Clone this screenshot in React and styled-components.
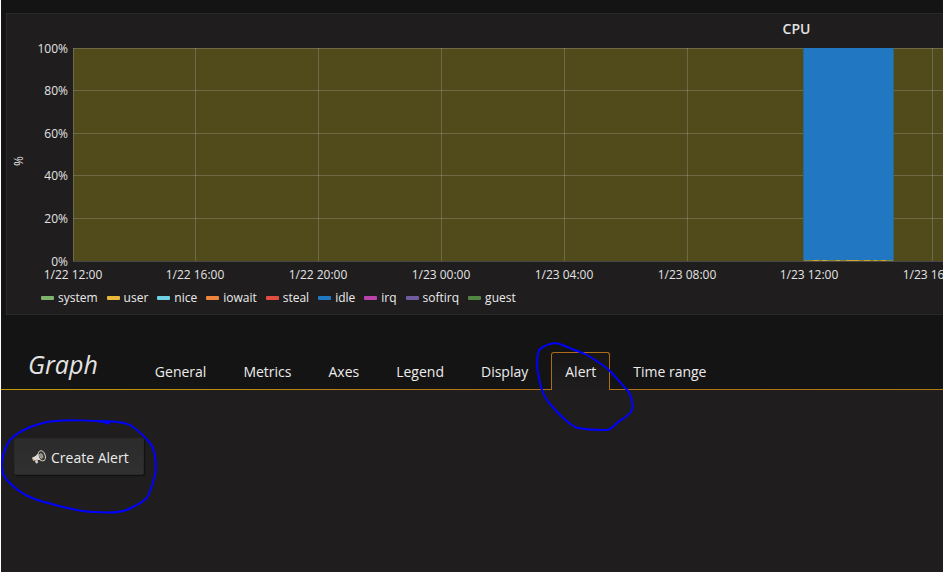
import React from "react";
import styled, { createGlobalStyle } from "styled-components";

const GlobalStyle = createGlobalStyle`
  * { box-sizing: border-box; }
  html, body { margin: 0; background: #141414; }
  body {
    font-family: "Open Sans", "Noto Sans", sans-serif;
    font-size: 14px;
    color: #e3e3e3;
    overflow: hidden;
  }
`;

const Page = styled.main`
  position: relative;
  display: flex;
  flex-direction: column;
  min-height: 100vh;
  padding-top: 13px;
  border-left: 1px solid #ffffff;
  overflow: hidden;
`;

/* The dashboard is wider than the window and runs off its right side. */
const Panel = styled.section`
  margin: 0 -644px 0 5px;
  border: 1px solid #292929;
  background: #1f1d1e;
`;

const PanelTitle = styled.h2`
  margin: 0;
  height: 30px;
  font-size: 14px;
  font-weight: 600;
  line-height: 30px;
  text-align: center;
`;

const Chart = styled.svg`
  display: block;
  width: 100%;
  height: 244px;
  font-size: 12px;
  fill: #e3e3e3;
`;

const Legend = styled.ul`
  display: flex;
  gap: 9px;
  margin: 0;
  padding: 0 0 6px 34px;
  list-style: none;
  font-size: 12px;
  line-height: 20px;
  color: #ececec;
`;

const LegendItem = styled.li`
  display: flex;
  align-items: center;
  gap: 4px;
`;

const Swatch = styled.span`
  width: 13px;
  height: 4px;
  border-radius: 1px;
  background: ${(p) => p.$color};
`;

const EditorHeader = styled.header`
  display: flex;
  align-items: flex-end;
  gap: 43px;
  height: 75px;
  padding-left: 27px;
  border-bottom: 1px solid;
  border-image: linear-gradient(90deg, #c49a08, #b06f18 60%, #b07a10) 1;
`;

const EditorTitle = styled.h1`
  margin: 0;
  font-size: 25px;
  font-style: italic;
  font-weight: 400;
  line-height: 50px;
`;

const Tabs = styled.nav`
  display: flex;
  align-items: flex-end;
  gap: 9px;
`;

const Tab = styled.button`
  height: ${(p) => (p.$active ? "38px" : "37px")};
  margin-bottom: ${(p) => (p.$active ? "-1px" : "0")};
  padding: 0 13px;
  border: 1px solid ${(p) => (p.$active ? "#b06a1c" : "transparent")};
  border-bottom: 0;
  border-radius: 3px 3px 0 0;
  background: ${(p) => (p.$active ? "linear-gradient(#171616, #1f1d1e)" : "transparent")};
  color: #ececec;
  font: inherit;
  white-space: nowrap;
  line-height: 38px;
`;

const EditorBody = styled.section`
  flex: 1;
  padding: 48px 13px;
  background: #1f1d1e;
`;

const CreateButton = styled.button`
  display: flex;
  align-items: center;
  gap: 4px;
  height: 37px;
  padding: 1px 14px 0 16px;
  border: 1px solid #292929;
  border-radius: 2px;
  background: linear-gradient(#2b2b2b, #303030);
  box-shadow: 1px 1px 1px #111111;
  color: #ececec;
  font: inherit;
`;

const Markup = styled.svg`
  position: absolute;
  top: 0;
  left: -1px;
  width: 943px;
  height: 572px;
  fill: none;
  stroke: #0000ff;
  stroke-width: 2;
  stroke-linejoin: round;
  pointer-events: none;
`;

const SERIES = [
  ["system", "#7eb26d"],
  ["user", "#eab839"],
  ["nice", "#6ed0e0"],
  ["iowait", "#ef843c"],
  ["steal", "#e24d42"],
  ["idle", "#1f78c1"],
  ["irq", "#ba43a9"],
  ["softirq", "#705da0"],
  ["guest", "#508642"],
];

const LEVELS = [100, 80, 60, 40, 20, 0];
const TIMES = [
  "1/22 12:00", "1/22 16:00", "1/22 20:00", "1/23 00:00", "1/23 04:00",
  "1/23 08:00", "1/23 12:00", "1/23 16:00", "1/23 20:00",
];
const TABS = ["General", "Metrics", "Axes", "Legend", "Display", "Alert", "Time range"];

const timeX = (i) => Math.floor(66 + i * 122.8);
const levelY = (v) => Math.floor(4 + (100 - v) * 2.13);

function CpuChart() {
  return (
    <Chart role="img" aria-label="CPU usage in percent">
      <rect x="66" y="4" width="1500" height="213" fill="#514a1b" />
      <g fill="#c8c8c8" fillOpacity="0.25">
        {LEVELS.map((v) => (
          <rect key={v} x="66" y={levelY(v)} width="1500" height="1" />
        ))}
        {TIMES.map((t, i) => (
          <rect key={t} x={timeX(i)} y="4" width="1" height="213" />
        ))}
      </g>
      <rect x="796" y="4" width="91" height="213" fill="#2f6680" />
      <rect x="797" y="4" width="89" height="213" fill="#2277c2" />
      <path d="M797 216.5H886" stroke="#8b8738" />
      <path d="M806 216.5h6m3 0h5m9 0h4m6 0h13m5 0h6m4 0h3m4 0h5" stroke="#d2a52b" />
      {LEVELS.map((v) => (
        <text key={v} x="61" y={levelY(v) + 5} textAnchor="end">{v}%</text>
      ))}
      {TIMES.map((t, i) => (
        <text key={t} x={timeX(i)} y="235" textAnchor="middle">{t}</text>
      ))}
      <text transform="translate(16 117) rotate(-90)" textAnchor="middle">%</text>
    </Chart>
  );
}

function Megaphone() {
  return (
    <svg width="16" height="16" viewBox="0 0 16 16" fill="none" stroke="#dedede" aria-hidden="true">
      <path d="M1.5 8.4 4.5 7 8.4 3 11.4 11.4 6 10.8 2.6 11.6Z" fill="#dcdcdc" stroke="none" />
      <path d="M4 11.5 5.2 14.2 6.8 13.6 6.2 11" fill="#d4d4d4" strokeWidth=".6" />
      <ellipse cx="10.8" cy="6.8" rx="3.4" ry="5.2" transform="rotate(-18 10.8 6.8)" fill="#3b3a39" stroke="#d6cfc2" strokeWidth="1" />
      <ellipse cx="10.2" cy="7" rx="1.4" ry="2.4" transform="rotate(-18 10.2 7)" fill="#7f8890" stroke="#c9b79c" strokeWidth=".8" />
      <path d="M1.4 8.5 2.8 11.8" stroke="#d8b48a" strokeWidth="1.2" />
    </svg>
  );
}

export default function App() {
  return (
    <>
      <GlobalStyle />
      <Page>
        <Panel>
          <PanelTitle>CPU</PanelTitle>
          <CpuChart />
          <Legend>
            {SERIES.map(([name, color]) => (
              <LegendItem key={name}>
                <Swatch $color={color} />
                {name}
              </LegendItem>
            ))}
          </Legend>
        </Panel>
        <EditorHeader>
          <EditorTitle>Graph</EditorTitle>
          <Tabs aria-label="Graph editor">
            {TABS.map((name) => (
              <Tab key={name} type="button" $active={name === "Alert"}>{name}</Tab>
            ))}
          </Tabs>
        </EditorHeader>
        <EditorBody>
          <CreateButton type="button">
            <Megaphone />
            Create Alert
          </CreateButton>
        </EditorBody>
        <Markup aria-hidden="true">
          <path d="M539 350C544 345 553 342 560 344C567 347 577 351 585 354C594 359 603 365 609 370C616 377 623 386 629 392C632 399 634 407 631 412C627 417 620 420 616 424C612 428 609 430 607 430C596 430 583 430 575 427C566 422 556 411 550 404C543 396 541 388 539 378C536 366 537 355 539 350Z" />
          <path d="M109 424C103 421 99 421 94 421M110 423C98 420 58 419 43 423C29 426 12 435 8 443C4 451 1 461 2 468C2 476 7 481 12 485C20 493 32 499 44 502C60 506 78 512 94 512C108 513 121 513 129 509C139 504 147 500 149 494C152 486 156 475 156 468C156 459 155 449 150 443C144 436 137 429 130 425C122 421 105 421 94 421" />
        </Markup>
      </Page>
    </>
  );
}
